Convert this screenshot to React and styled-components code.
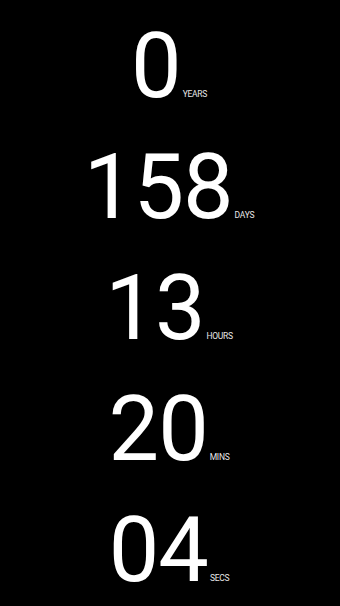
import React from "react";
import styled, { createGlobalStyle } from "styled-components";

const GlobalStyle = createGlobalStyle`
  html, body {
    margin: 0;
    padding: 0;
    background: #000;
  }
  body {
    font-family: Roboto, "Noto Sans", sans-serif;
    color: #fff;
  }
`;

const Screen = styled.div`
  width: 340px;
  height: 606px;
  background: #000;
  display: flex;
  flex-direction: column;
  align-items: center;
  padding-top: 6px;
  box-sizing: border-box;
  overflow: hidden;
`;

const Row = styled.div`
  display: flex;
  align-items: baseline;
  justify-content: center;
  height: 121px;
  line-height: 121px;
  margin-right: 2px;
`;

const Value = styled.span`
  font-size: 90px;
  font-weight: 400;
  letter-spacing: -1px;
  color: #fff;
`;

const Unit = styled.span`
  font-size: 8.5px;
  font-weight: 400;
  line-height: 1;
  margin-left: 2px;
  letter-spacing: -0.3px;
  color: #e8e8e8;
  text-transform: uppercase;
`;

const parts = [
  { value: "0", unit: "Years" },
  { value: "158", unit: "Days" },
  { value: "13", unit: "Hours" },
  { value: "20", unit: "Mins" },
  { value: "04", unit: "Secs" },
];

export default function App() {
  return (
    <>
      <GlobalStyle />
      <Screen>
        {parts.map((p) => (
          <Row key={p.unit}>
            <Value>{p.value}</Value>
            <Unit>{p.unit}</Unit>
          </Row>
        ))}
      </Screen>
    </>
  );
}
